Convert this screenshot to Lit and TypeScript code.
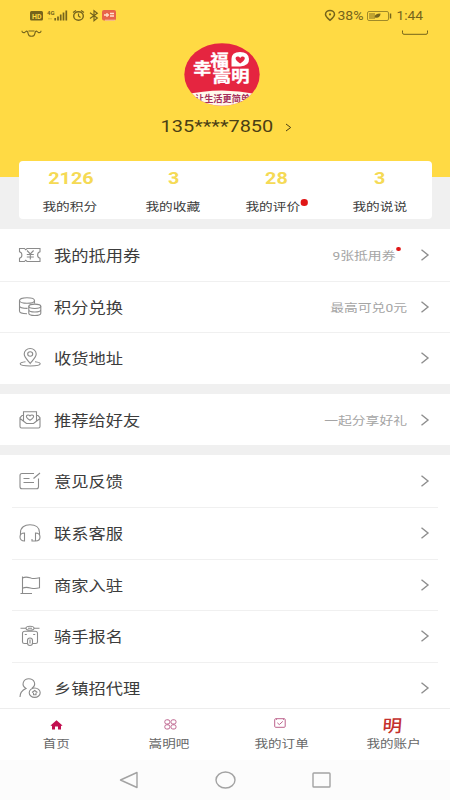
import { LitElement, html, svg, css, nothing } from "lit";
import { customElement } from "lit/decorators.js";

interface Row {
  icon: unknown;
  label: string;
  note?: string;
  dot?: boolean;
}

// Row icons share a 24x22 box.
const icons = {
  ticket: svg`<path d="M1.500 4.500h5l1.200 1.300L9 4.500h13v3.200c-3.200.8-3.200 5.800 0 6.600v3.200H9l-1.300-1.300-1.200 1.300h-5v-3.200c3.200-.8 3.200-5.800 0-6.600z"/><path d="M9 6.500l3.300 3.500 3.300-3.500M12.300 10v5.500M8.800 10.500h7M8.800 13h7"/>`,
  coins: svg`<ellipse cx="9" cy="4.500" rx="7.500" ry="2.800"/><path d="M1.500 4.500v10.500c0 1.500 3 2.700 7.500 2.700M16.500 4.500v3M1.500 9.700c0 1.500 3 2.700 8 2.700"/><ellipse cx="16.800" cy="10.300" rx="6" ry="2.200"/><path d="M10.800 10.300v7c0 3 12 3 12 0v-7M10.800 13.800c0 3 12 3 12 0"/>`,
  pin: svg`<path d="M12.200 16.500C9 12.500 6.200 10 6.200 7a6 5.500 0 0 1 12 0c0 3-2.800 5.500-6 9.500z"/><ellipse cx="12.200" cy="7" rx="2.500" ry="2.200"/><path d="M7.500 14.700c-3 .3-5.300 1.200-5.300 2.100 0 1.300 4.500 2.200 10 2.200s10-.9 10-2.200c0-.9-2.200-1.800-5.200-2.100"/>`,
  mail: svg`<path d="M5.500 6.500H4L2 8.800v8.700q0 1.500 1.500 1.500h17q1.500 0 1.500-1.500V8.800l-2-2.300h-1.500M2 9.500l6.500 5h7l6.500-5M5.500 12V2.700h13V12"/><path d="M12 11.200c-7-4.200-2-6.700 0-4.300 2-2.400 7 .1 0 4.300z"/>`,
  edit: svg`<path d="M16 3.500H4Q2 3.500 2 5.500v11.300q0 2 2 2h14.500q2 0 2-2V8.500M15.500 8.500L22 3M5.500 8.500h6M5.500 12.500h10.500"/>`,
  phones: svg`<path d="M2.500 13v-2.500C2.500 5.500 6.500 2.800 12 2.800s9.500 2.700 9.500 7.700V13"/><path d="M6.500 11v8C3.500 19 2 17.300 2 15s1.500-4 4.500-4zM17.500 11v8c3 0 4.500-1.700 4.500-4s-1.500-4-4.500-4zM17.500 19h-3.500v-2"/>`,
  flag: svg`<path d="M4.500 2.500v17M2.500 19.500H14M4.500 4c4-2 6.500-.3 9 .3 2.500.5 5 .3 8-.5v10c-3.500 1-5.500 1-8 .4-3-.7-5.500-1.700-9 .1"/>`,
  scooter: svg`<path d="M2.500 3.200h5.500M16 3.200h5.500"/><ellipse cx="12" cy="3.200" rx="4" ry="2"/><path d="M10 3.200h4M7 6.300h10q2.500 0 2.500 2V17q0 1.500-2 1.500h-3M9.500 18.500h-3q-2 0-2-1.500V8.300q0-2 2.500-2M6.800 9.500h2M15.200 9.500h2"/><rect x="9.500" y="13" width="5" height="7.500" rx="2.500"/><path d="M12 14.500v4"/>`,
  agent: svg`<path d="M2 20c0-4.500 2.500-7 6-8.500C2.500 8 5.500 1.800 10.800 1.800c5.200 0 8.500 5.700 3 9.700"/><ellipse cx="16.700" cy="15.700" rx="5.500" ry="4.700"/><path d="M14 15.500l2.700-2 2.700 2M15.500 15.800v2h2.500v-2"/>`,
};

const groups: Row[][] = [
  [
    { icon: icons.ticket, label: "我的抵用券", note: "9张抵用券", dot: true },
    { icon: icons.coins, label: "积分兑换", note: "最高可兑0元" },
    { icon: icons.pin, label: "收货地址" },
  ],
  [{ icon: icons.mail, label: "推荐给好友", note: "一起分享好礼" }],
  [
    { icon: icons.edit, label: "意见反馈" },
    { icon: icons.phones, label: "联系客服" },
    { icon: icons.flag, label: "商家入驻" },
    { icon: icons.scooter, label: "骑手报名" },
    { icon: icons.agent, label: "乡镇招代理" },
  ],
];

const stats = [
  { value: "2126", label: "我的积分" },
  { value: "3", label: "我的收藏" },
  { value: "28", label: "我的评价", dot: true },
  { value: "3", label: "我的说说" },
];

@customElement("app-root")
export class AppRoot extends LitElement {
  static styles = css`
    :host {
      display: flex;
      flex-direction: column;
      height: 800px;
      width: 450px;
      overflow: hidden;
      background: #f0f0f0;
      color: #3c3c3c;
      font-family: Roboto, "Noto Sans CJK SC", sans-serif;
    }
    * { box-sizing: border-box; }
    svg { display: block; flex: none; }
    .wide { display: inline-block; white-space: nowrap; transform: scaleX(1.2); }
    .hero {
      flex: none;
      height: 177px;
      background: #ffda44;
      display: flex;
      flex-direction: column;
      align-items: center;
    }
    .status {
      align-self: stretch;
      height: 43px;
      padding: 0 19px 0 20px;
      display: flex;
      justify-content: space-between;
      color: #75641c;
    }
    .logo { margin-right: 7px; }
    .brand { font: 700 15.500px "Noto Sans CJK SC", sans-serif; fill: #fff; stroke: #fff; stroke-width: 0.300; }
    .slogan { font: 700 9px "Noto Sans CJK SC", sans-serif; fill: #a5305c; }
    .user {
      margin-top: 10px;
      height: 22px;
      display: flex;
      align-items: center;
      justify-content: center;
      gap: 22px;
      padding-left: 12px;
      color: #4b4015;
    }
    .phone { font-size: 16.600px; line-height: 22px; }
    .card {
      flex: none;
      position: relative;
      height: 58px;
      margin: -16px 18px 10px 19px;
      border-radius: 4px;
      background: #fff;
      display: grid;
      grid-template-columns: repeat(4, 103.100px);
    }
    .stat { display: flex; flex-direction: column; align-items: center; }
    .value {
      font-size: 16.500px;
      font-weight: 700;
      line-height: 20px;
      margin-top: 8px;
      color: #f5da55;
    }
    .statLabel {
      position: relative;
      font-size: 11.400px;
      line-height: 16px;
      margin: 10px 1px 0 0;
    }
    .marked { margin-right: 8px; }
    .dot {
      position: absolute;
      background: #e01616;
      border-radius: 50%;
      width: 5.800px;
      height: 6.500px;
      top: 0;
      right: -6.500px;
    }
    .tiny { width: 3.500px; height: 4px; top: 0; right: -4.500px; }
    .group { flex: none; background: #fff; margin-bottom: 10px; }
    .last { flex: 1 1 0; min-height: 0; overflow: hidden; margin: 0; }
    .row {
      height: 51.600px;
      display: flex;
      align-items: center;
      padding: 0 20px 0 18px;
    }
    .row + .row { border-top: 1px solid #f0f0f0; }
    .last .row { margin: 0 12px; padding: 0 8px 0 6px; }
    .icon { fill: none; stroke: #8b8b8b; stroke-width: 1.100; }
    .label {
      font-size: 14.400px;
      margin: 0 0 1px 12px;
      transform-origin: left;
      flex: 1;
    }
    .note {
      position: relative;
      font-size: 11.500px;
      color: #a5a5a5;
      margin-right: 13px;
      transform-origin: right;
    }
    .noteMarked { margin-right: 25px; }
    .tabs {
      flex: none;
      height: 52px;
      background: #fff;
      border-top: 1px solid #ededed;
      display: grid;
      grid-template-columns: repeat(4, 112.500px);
    }
    .tab { display: flex; flex-direction: column; align-items: center; }
    .pic { height: 27px; display: flex; align-items: center; padding-top: 4px; }
    .tabLabel { font-size: 11.300px; line-height: 16px; margin-top: 1px; color: #686868; }
    .ming {
      font: 500 17px "Liberation Serif", "Noto Sans CJK SC", serif;
      color: #c4302d;
      line-height: 20px;
      padding-top: 5px;
      margin-right: 2px;
      transform: scaleX(1.150) skewX(-4deg);
    }
    .nav {
      flex: none;
      height: 40px;
      background: #fcfcfc;
      display: flex;
      align-items: center;
      justify-content: center;
      gap: 76px;
      padding-right: 1px;
    }
    .nav svg { fill: none; stroke: #a3a3a3; stroke-width: 1.400; }
    .shop .pic { padding-left: 3px; }
    .orders .pic { padding: 1px 3px 0 0; }
  `;

  private row(r: Row) {
    return html`<div class="row">
      <svg class="icon" width="24" height="22" viewBox="0 0 24 22">${r.icon}</svg>
      <span class="wide label">${r.label}</span>
      ${r.note
        ? html`<span class="wide note ${r.dot ? "noteMarked" : ""}"
            >${r.note}${r.dot ? html`<i class="dot tiny"></i>` : nothing}</span
          >`
        : nothing}
      <svg width="10" height="14" viewBox="0 0 10 14" fill="none" stroke="#8e8e8e" stroke-width="1.400">
        <path d="M1.500 1.800L8 7l-6.500 5.200" />
      </svg>
    </div>`;
  }

  render() {
    return html`
      <header class="hero">
        <div class="status">
          <svg width="110" height="43" viewBox="20 0 110 43" fill="none" stroke="currentColor">
            <rect x="30" y="11" width="13" height="9.500" rx="1.500" fill="currentColor" stroke="none" />
            <text x="32" y="18.500" font-size="7.500" font-weight="700" textLength="9.500" lengthAdjust="spacingAndGlyphs" fill="#ffda44" stroke="none">HD</text>
            <text x="47" y="15" font-size="5.500" font-weight="700" textLength="7.500" lengthAdjust="spacingAndGlyphs" fill="currentColor" stroke="none">4G</text>
            <path d="M48 18.800h4" stroke="#d4b538" />
            <path d="M55.200 20.500v-2.500M58 20.500v-4M60.700 20.500v-6M63.500 20.500v-8M66.300 20.500v-10" stroke-width="1.700" />
            <ellipse cx="78.500" cy="16" rx="4.800" ry="4.300" stroke-width="1.400" />
            <path d="M78.500 13.500V16l2 1.500M73 12.500l3-2M84 12.500l-3-2" stroke-width="1.200" />
            <path d="M90 12.800l7.300 5.200-3.300 2.700v-10l3.300 2.500-7.300 5.300" stroke-width="1.200" />
            <rect x="102" y="10" width="14" height="10.500" rx="2" fill="#e8644a" stroke="none" />
            <path d="M104 15h5M107 13v4M110 13.500h4M110 16h4" stroke="#ffe3ce" stroke-width="1.300" />
            <path d="M105 20.200h10" stroke="#f8c7a0" />
            <path d="M22 30.800q0 2.200 2.500 1.800l2-1.500q1.300 0 1.700 2.700.5 2.500 3.300 2.500t3.300-2.500q.4-2.700 1.700-2.700l2 1.500q2.500.4 2.500-1.800M28.500 31h6" stroke-width="1.100" />
          </svg>
          <svg width="114" height="43" viewBox="317 0 114 43" fill="none" stroke="currentColor">
            <path d="M330 20.300c-2.500-2.300-4.500-4-4.500-5.900a4.500 4 0 0 1 9 0c0 1.900-2 3.600-4.500 5.900z" stroke-width="1.500" />
            <circle cx="330" cy="14.400" r="1.100" fill="currentColor" stroke="none" />
            <text x="337.500" y="19.700" font-size="12" font-family="Roboto" textLength="26" lengthAdjust="spacingAndGlyphs" fill="currentColor" stroke="none">38%</text>
            <rect x="367.500" y="11.500" width="21" height="9" rx="1.500" stroke="#a08a28" />
            <rect x="369" y="13" width="6" height="6" fill="#c1a431" stroke="none" />
            <path d="M390.500 13.500v5" stroke-width="1.500" />
            <path d="M374.500 17.500q0-4 6-4 0 5-6 4z" fill="currentColor" stroke="none" />
            <text x="396.500" y="19.700" font-size="12" font-family="Roboto" textLength="26.500" lengthAdjust="spacingAndGlyphs" fill="currentColor" stroke="none">1:44</text>
            <path d="M402.500 30.500v2.300q0 1.500 1.500 1.500h22q1.500 0 1.500-1.500v-2.300" />
          </svg>
        </div>
        <svg class="logo" width="76" height="63" viewBox="0 0 76 63">
          <defs><clipPath id="disc"><ellipse cx="38" cy="31.500" rx="37.700" ry="31.300" /></clipPath></defs>
          <g clip-path="url(#disc)">
            <rect width="76" height="63" fill="#e52540" />
            <path d="M0 52Q38 43 76 52v11H0z" fill="#fff8ec" />
            <text class="slogan" x="11" y="58.500" textLength="55" lengthAdjust="spacingAndGlyphs">让生活更简单</text>
          </g>
          <text class="brand" transform="scale(1.200 1)"><tspan x="7.600" y="31.500">幸</tspan><tspan x="21.800" y="23.300">福</tspan><tspan x="23.700" y="39.500">嵩明</tspan></text>
          <path d="M47.500 23.500V16q0-7 8.500-7t9 7-9 7.500z" fill="#fff" />
          <path d="M56.200 20.500c-9-5.500-2.500-9 0-5.500 2.500-3.500 9 0 0 5.500z" fill="#e52540" />
        </svg>
        <div class="user">
          <span class="wide phone">135****7850</span>
          <svg width="7" height="9" viewBox="0 0 7 9" fill="none" stroke="currentColor"><path d="M1 1l4.700 3.500L1 8" /></svg>
        </div>
      </header>
      <section class="card">
        ${stats.map(
          (s) => html`<div class="stat">
            <span class="wide value">${s.value}</span>
            <span class="wide statLabel ${s.dot ? "marked" : ""}"
              >${s.label}${s.dot ? html`<i class="dot"></i>` : nothing}</span
            >
          </div>`,
        )}
      </section>
      ${groups.map(
        (g, i) => html`<section class="group ${i === 2 ? "last" : ""}">${g.map((r) => this.row(r))}</section>`,
      )}
      <footer class="tabs">
        <div class="tab">
          <div class="pic"><svg width="13" height="10" viewBox="0 0 13 10"><path d="M6.500.3L.5 5.400l.8.700.7-.5v4h3V6.500h3v3.100h3v-4l.7.500.8-.7z" fill="#c20f50" /></svg></div>
          <span class="wide tabLabel">首页</span>
        </div>
        <div class="tab shop">
          <div class="pic"><svg width="13" height="11" viewBox="0 0 13 11" fill="none" stroke="#bd638d"><rect x=".8" y=".8" width="5" height="4.200" rx="1.800" /><rect x="7" y=".8" width="5" height="4.200" rx="1.800" /><rect x=".8" y="5.800" width="5" height="4.200" rx="1.800" /><rect x="7" y="5.800" width="5" height="4.200" rx="1.800" /></svg></div>
          <span class="wide tabLabel">嵩明吧</span>
        </div>
        <div class="tab orders">
          <div class="pic"><svg width="12" height="10" viewBox="0 0 12 10" fill="none" stroke="#bd638d"><rect x=".7" y=".7" width="10.500" height="8.600" rx="1" /><path d="M3.300 4.800l2 1.800 3.500-3.200M2.500.8v1M9.500.8v1" /></svg></div>
          <span class="wide tabLabel">我的订单</span>
        </div>
        <div class="tab">
          <div class="pic"><span class="wide ming">明</span></div>
          <span class="wide tabLabel">我的账户</span>
        </div>
      </footer>
      <nav class="nav">
        <svg width="20" height="18" viewBox="0 0 20 18"><path d="M18 1.500v15L1.500 9z" stroke-linejoin="round" /></svg>
        <svg width="21" height="18" viewBox="0 0 21 18"><ellipse cx="10.500" cy="9" rx="9.500" ry="8" /></svg>
        <svg width="19" height="16" viewBox="0 0 19 16"><rect x="1" y="1" width="17" height="14" rx=".8" /></svg>
      </nav>
    `;
  }
}
